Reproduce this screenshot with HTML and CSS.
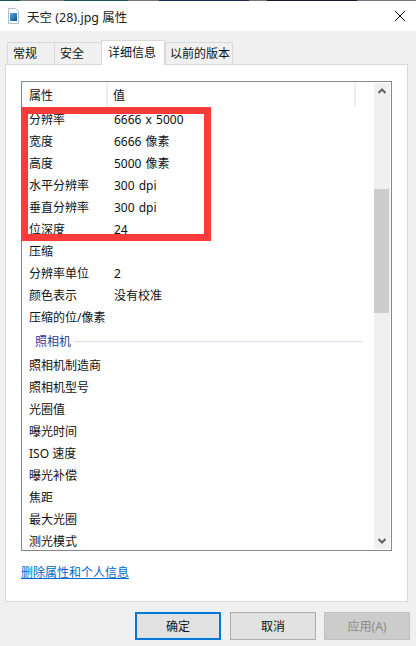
FILE: index.html
```html
<!DOCTYPE html>
<html lang="zh-CN">
<head>
    <meta charset="UTF-8">
    <title>天空 (28).jpg 属性</title>
    <link rel="stylesheet" href="styles.css">
</head>
<body>
    <div class="window">
        <div class="topline"></div>
        <div class="titlebar">
            <svg class="file-icon" width="12" height="16" viewBox="0 0 12 16">
                <defs>
                    <linearGradient id="sky" x1="0" y1="0" x2="1" y2="1">
                        <stop offset="0" stop-color="#4fb0e8"/>
                        <stop offset="1" stop-color="#0b4f96"/>
                    </linearGradient>
                </defs>
                <path d="M.5 .5h7l3 3v12H.5z" fill="#fbfcfd" stroke="#b4bec8"/>
                <rect x="2" y="5" width="7" height="8" fill="url(#sky)"/>
            </svg>
            <span class="title">天空 (28).jpg 属性</span>
            <svg class="close" width="10" height="10" viewBox="0 0 10 10">
                <path d="M0 0l10 10M10 0L0 10" stroke="#111" stroke-width="1" fill="none"/>
            </svg>
        </div>

        <div class="tabs">
            <div class="tab">常规</div>
            <div class="tab">安全</div>
            <div class="tab active">详细信息</div>
            <div class="tab tab-last">以前的版本</div>
        </div>

        <div class="panel">
            <div class="list">
                <div class="list-main">
                    <div class="list-head">
                        <div class="col-name">属性</div>
                        <div class="col-value">值</div>
                    </div>
                    <div class="rows">
                        <div class="row"><span class="col-name">分辨率</span><span class="val">6666 x 5000</span></div>
                        <div class="row"><span class="col-name">宽度</span><span class="val">6666 像素</span></div>
                        <div class="row"><span class="col-name">高度</span><span class="val">5000 像素</span></div>
                        <div class="row"><span class="col-name">水平分辨率</span><span class="val">300 dpi</span></div>
                        <div class="row"><span class="col-name">垂直分辨率</span><span class="val">300 dpi</span></div>
                        <div class="row"><span class="col-name">位深度</span><span class="val">24</span></div>
                        <div class="row"><span class="col-name">压缩</span></div>
                        <div class="row"><span class="col-name">分辨率单位</span><span class="val">2</span></div>
                        <div class="row"><span class="col-name">颜色表示</span><span class="val">没有校准</span></div>
                        <div class="row"><span class="col-name">压缩的位/像素</span></div>
                        <div class="group"><span>照相机</span><div class="group-line"></div></div>
                        <div class="row"><span class="col-name">照相机制造商</span></div>
                        <div class="row"><span class="col-name">照相机型号</span></div>
                        <div class="row"><span class="col-name">光圈值</span></div>
                        <div class="row"><span class="col-name">曝光时间</span></div>
                        <div class="row"><span class="col-name">ISO 速度</span></div>
                        <div class="row"><span class="col-name">曝光补偿</span></div>
                        <div class="row"><span class="col-name">焦距</span></div>
                        <div class="row"><span class="col-name">最大光圈</span></div>
                        <div class="row"><span class="col-name">测光模式</span></div>
                    </div>
                </div>
                <div class="scrollbar">
                    <div class="arrow">
                        <svg width="8" height="6" viewBox="0 0 8 6"><path d="M.5 5L4 1.5 7.5 5" fill="none" stroke="#606060" stroke-width="2"/></svg>
                    </div>
                    <div class="track"><div class="thumb"></div></div>
                    <div class="arrow">
                        <svg width="8" height="6" viewBox="0 0 8 6"><path d="M.5 1L4 4.5 7.5 1" fill="none" stroke="#606060" stroke-width="2"/></svg>
                    </div>
                </div>
                <div class="highlight"></div>
            </div>
            <a class="remove-link" href="#">删除属性和个人信息</a>
        </div>

        <div class="buttons">
            <button class="btn default">确定</button>
            <button class="btn">取消</button>
            <button class="btn disabled">应用(A)</button>
        </div>
    </div>
</body>
</html>
```

FILE: styles.css
```css
html, body {
    margin: 0;
    padding: 0;
}
body {
    font-family: "Noto Sans", "Noto Sans CJK SC", sans-serif;
    font-size: 12px;
    color: #111;
    background-color: #f0f0f0;
}
.window {
    width: 416px;
    height: 646px;
    overflow: hidden;
    background-color: #f0f0f0;
}
/* strip of the desktop showing through above the title bar */
.topline {
    height: 1px;
    background: linear-gradient(to right,
        #1f4f55 0 20px, #777 20px 64px, #1f4f55 64px 128px, #777 128px 159px,
        #1a2a55 159px 249px, #777 249px 267px, #17173a 267px 357px, #777 357px);
}
.titlebar {
    height: 30px;
    background-color: #ffffff;
    display: flex;
    align-items: center;
    padding: 0 11px 0 8px;
}
.file-icon {
    flex: none;
    margin-right: 7px;
}
.title {
    flex: 1;
    font-size: 12.5px;
    color: #222;
}
.tabs {
    display: grid;
    grid-template-columns: 47px 47px 64px 68px;
    align-items: end;
    height: 33px;
    padding-left: 7px;
}
.tab {
    height: 22px;
    line-height: 21px;
    padding-left: 5px;
    border: 1px solid #d9d9d9;
    border-bottom: none;
    border-right: none;
    background-color: #f0f0f0;
    box-sizing: border-box;
    white-space: nowrap;
    position: relative;
}
.tab-last {
    padding-left: 4px;
    border-right: 1px solid #d9d9d9;
}
.tab.active {
    height: 25px;
    line-height: 24px;
    padding-left: 6px;
    background-color: #ffffff;
    border-right: 1px solid #d9d9d9;
    margin-bottom: -1px;
    z-index: 1;
}
.panel {
    width: 403px;
    height: 538px;
    margin-left: 5px;
    box-sizing: border-box;
    background-color: #ffffff;
    border: 1px solid #d9d9d9;
    padding: 16px 15px 0;
}
.list {
    position: relative;
    display: flex;
    height: 468px;
    border: 1px solid #828790;
    background-color: #ffffff;
}
.list-main {
    flex: 1;
    min-width: 0;
    overflow: hidden;
}
.list-head {
    display: flex;
    height: 25px;
    line-height: 27px;
    margin-right: 18px;
}
.list-head .col-name {
    width: 77px;
    border-right: 2px solid #eeeeee;
    height: 24px;
}
.list-head .col-value {
    flex: 1;
    padding-left: 5px;
    border-right: 2px solid #eeeeee;
    height: 24px;
}
.col-name {
    width: 85px;
    padding-left: 7px;
    flex: none;
}
.rows {
    padding-top: 2px;
}
.row {
    display: flex;
    height: 22px;
    line-height: 22px;
    white-space: nowrap;
}
.val {
    word-spacing: 1px;
}
.group {
    display: flex;
    align-items: center;
    height: 24px;
    padding: 0 0 2px 13px;
    color: #2b3a9c;
}
.group-line {
    width: 288px;
    height: 1px;
    margin-left: 3px;
    background-color: #d5dfef;
}
.scrollbar {
    width: 16px;
    margin: 1px 1px 1px 0;
    display: flex;
    flex-direction: column;
    background-color: #f0f0f0;
}
.arrow {
    height: 16px;
    display: flex;
    align-items: center;
    justify-content: center;
    flex: none;
}
.track {
    flex: 1;
    padding-top: 90px;
}
.thumb {
    height: 124px;
    margin-right: 1px;
    background-color: #cdcdcd;
}
.highlight {
    position: absolute;
    left: -1px;
    top: 25px;
    width: 176px;
    height: 120px;
    border: 7px solid #fb3a3a;
}
.remove-link {
    display: inline-block;
    margin-top: 12px;
    color: #0066cc;
}
.buttons {
    display: flex;
    gap: 8px;
    padding: 10px 6px 0 135px;
}
.btn {
    width: 86px;
    height: 28px;
    padding: 0;
    font-family: inherit;
    font-size: 12px;
    color: #111;
    background-color: #e1e1e1;
    border: 1px solid #adadad;
    box-sizing: border-box;
}
.btn.default {
    border: 2px solid #0078d7;
    margin-right: 1px;
}
.btn.disabled {
    background-color: #cccccc;
    border-color: #bfbfbf;
    color: #8a8a8a;
}
```
